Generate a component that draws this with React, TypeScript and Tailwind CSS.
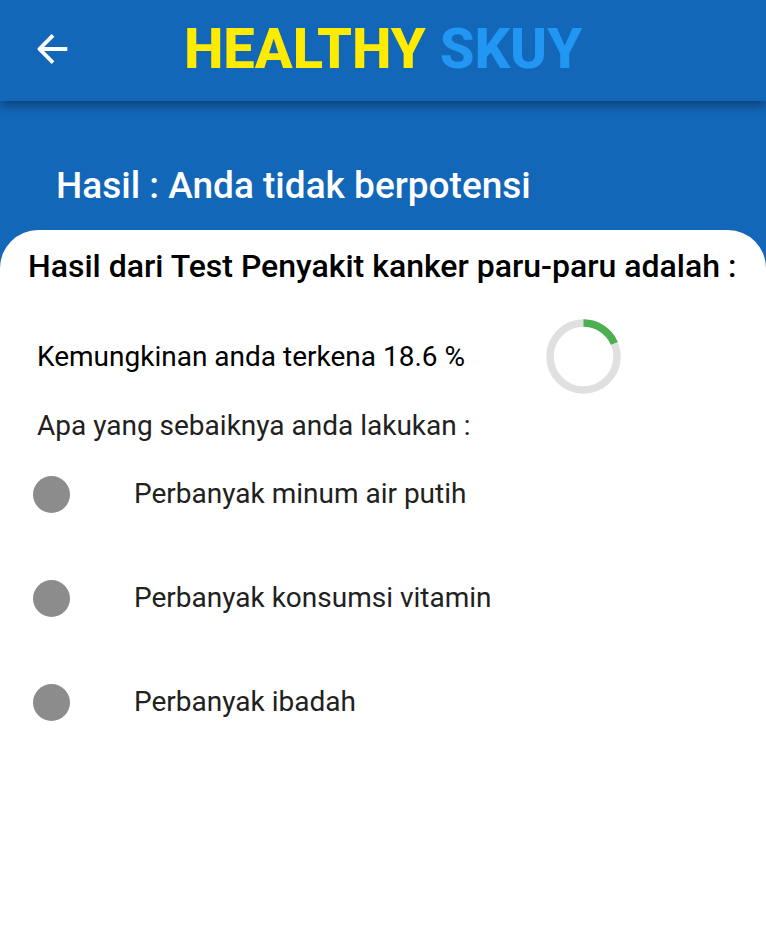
import React from "react";

const tips = ["Perbanyak minum air putih", "Perbanyak konsumsi vitamin", "Perbanyak ibadah"];
const risk = 18.6;

function RiskRing({ value }: { value: number }) {
  return (
    <svg viewBox="0 0 75 75" className="size-[75px] shrink-0" role="img" aria-label={`${value} %`}>
      <circle cx="37.5" cy="37.5" r="33.5" fill="none" stroke="#e0e0e0" strokeWidth="7.5" />
      <circle
        cx="37.5"
        cy="37.5"
        r="33.5"
        fill="none"
        stroke="#4caf50"
        strokeWidth="7.5"
        pathLength={100}
        strokeDasharray={`${value} 100`}
        transform="rotate(-90 37.5 37.5)"
      />
    </svg>
  );
}

export default function App() {
  return (
    <div className="flex min-h-screen flex-col bg-[#1367b9] font-[Roboto,sans-serif]">
      <header className="relative flex h-[101px] items-center justify-center bg-[#1367b9] pb-1 shadow-[0_4px_10px_rgba(0,0,0,0.4)]">
        <button type="button" aria-label="Kembali" className="absolute left-8 p-1 text-white">
          <svg viewBox="0 0 32 32" className="size-8" fill="none" stroke="currentColor" strokeWidth="3.8">
            <path d="M31.3 16H4M17 2.4 3.4 16 17 29.6" strokeLinejoin="round" />
          </svg>
        </button>
        <h1 className="text-[56px] leading-none font-extrabold text-[#ffeb00]">
          HEALTHY <span className="text-[#2196f3]">SKUY</span>
        </h1>
      </header>
      <h2 className="px-14 pt-16 pb-6 text-[37px] leading-[41px] font-medium text-white">
        Hasil : Anda tidak berpotensi
      </h2>
      <main className="flex-1 rounded-t-[38px] bg-white text-[#212121]">
        <h3 className="px-7 pt-4 text-[32px] leading-[41px] font-medium text-black">
          Hasil dari Test Penyakit kanker paru-paru adalah :
        </h3>
        <div className="mt-8 flex items-center gap-[81px] px-[37px] text-[28px] text-black">
          <p>Kemungkinan anda terkena {risk} %</p>
          <RiskRing value={risk} />
        </div>
        <p className="mt-3 px-[37px] text-[28px] leading-10">Apa yang sebaiknya anda lakukan :</p>
        <ul className="-mt-1 text-[28px]">
          {tips.map((tip) => (
            <li key={tip} className="flex h-[104px] items-center gap-16 px-[33px]">
              <span className="size-[37px] shrink-0 rounded-full bg-[#8c8c8c]" />
              {tip}
            </li>
          ))}
        </ul>
      </main>
    </div>
  );
}
